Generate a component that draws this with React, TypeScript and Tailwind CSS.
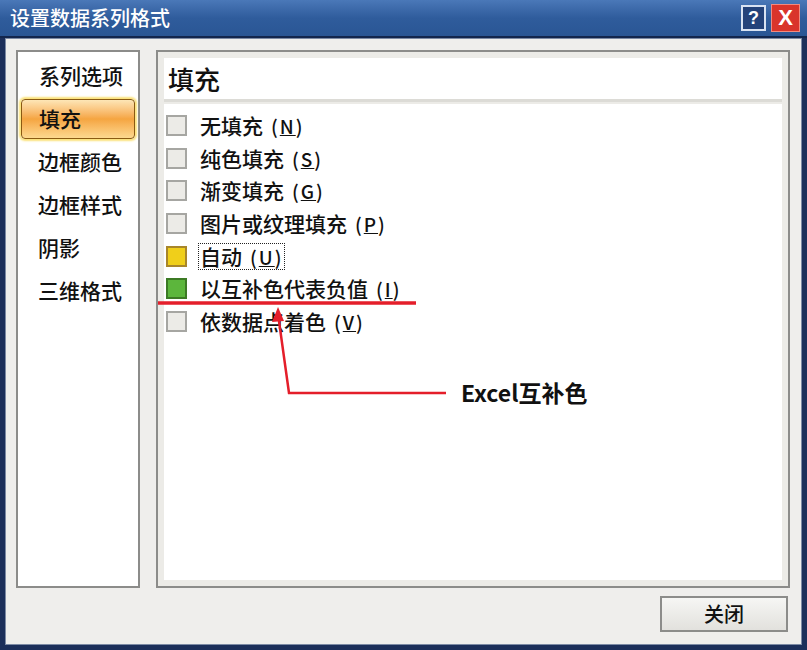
import React from "react";

const F = { fontFamily: '"Noto Sans CJK SC", "Noto Sans", sans-serif' };

function Item({ label, k, box, focus }: { label: string; k: string; box: string; focus?: boolean }) {
  return (
    <div className="flex items-center h-[32.7px]">
      <div className={`w-[21px] h-[21px] border-2 ${box}`} />
      <div className={`ml-[11px] flex items-center text-[21px] leading-[25px] text-[#111] px-[1px] ${focus ? "border border-dotted border-[#222]" : "border border-transparent"}`}>
        <span>{label}</span>
        <span className="ml-[8px] text-[19px] tracking-[2px]">(<u>{k}</u>)</span>
      </div>
    </div>
  );
}

export default function App() {
  const left = ["系列选项", "填充", "边框颜色", "边框样式", "阴影", "三维格式"];
  return (
    <div className="w-[807px] h-[650px] bg-[#1c2f5a] flex flex-col relative overflow-hidden font-medium" style={F}>
      {/* title bar */}
      <div className="h-[38px] bg-gradient-to-b from-[#4a78b8] via-[#2f5c9c] to-[#2a5694] flex items-center justify-between pl-[10px] pr-[7px] border-b-2 border-[#13264d]">
        <span className="text-white text-[20px] leading-none">设置数据系列格式</span>
        <div className="flex items-center gap-[5px]">
          <div className="w-[25px] h-[26px] bg-[#23427a] border-2 border-[#d8e2f2] flex items-center justify-center text-white font-bold text-[18px] leading-none" style={{ fontFamily: '"Liberation Sans", sans-serif' }}>?</div>
          <div className="w-[29px] h-[28px] bg-[#d9342b] border border-[#f08a80] flex items-center justify-center text-white font-bold text-[22px] leading-none" style={{ fontFamily: '"Liberation Sans", sans-serif' }}>X</div>
        </div>
      </div>
      {/* body */}
      <div className="flex-1 mx-[5px] mb-[5px] bg-[#efeeec] flex flex-col border border-[#7c8aa4]">
        <div className="flex pt-[11px] pl-[10px] pr-[11px] h-[549px]">
          <div className="w-[124px] h-full bg-white border-2 border-[#8c8c8a] flex flex-col pt-[2px]">
            {left.map((t, i) =>
              i === 1 ? (
                <div key={t} className="mx-[3px] h-[40px] my-[1.5px] rounded-[4px] border border-[#8a5a12] bg-gradient-to-b from-[#fde6b6] via-[#f5a540] to-[#fcd98e] shadow-[0_0_2px_2px_#fbe27a] flex items-center pl-[17px] text-[21px] text-[#111]">
                  {t}
                </div>
              ) : (
                <div key={t} className={`h-[43px] flex items-center text-[21px] text-[#111] ${i === 0 ? "pl-[21px]" : "pl-[20px]"}`}>
                  {t}
                </div>
              )
            )}
          </div>
          <div className="ml-[16px] flex-1 h-full border-2 border-[#8c8c8a] bg-[#ecebe7] p-[6px] flex flex-col">
            <div className="h-[44px] bg-white border-b-[3px] border-[#dcdbd6] flex items-center pl-[4px] text-[26px] text-[#111]">填充</div>
            <div className="flex-1 bg-white mt-[2px] pl-[2px] pt-[5px] flex flex-col">
              <Item label="无填充" k="N" box="border-[#a6a6a2] bg-[#ecebe7]" />
              <Item label="纯色填充" k="S" box="border-[#a6a6a2] bg-[#ecebe7]" />
              <Item label="渐变填充" k="G" box="border-[#a6a6a2] bg-[#ecebe7]" />
              <Item label="图片或纹理填充" k="P" box="border-[#a6a6a2] bg-[#ecebe7]" />
              <Item label="自动" k="U" box="border-[#a8862a] bg-[#f0cf1a]" focus />
              <Item label="以互补色代表负值" k="I" box="border-[#3c7a24] bg-[#5cb63c]" />
              <Item label="依数据点着色" k="V" box="border-[#a6a6a2] bg-[#ecebe7]" />
            </div>
          </div>
        </div>
        <div className="flex-1 flex justify-end items-start pt-[8px] pr-[13px]">
          <div className="w-[128px] h-[36px] border-2 border-[#8c8c8a] bg-gradient-to-b from-[#f6f6f4] to-[#e2e1dd] flex items-center justify-center text-[20px] text-[#111]">关闭</div>
        </div>
      </div>
      {/* annotation overlay */}
      <svg className="absolute left-0 top-0 pointer-events-none" width="807" height="650">
        <line x1="158" y1="303" x2="416" y2="303" stroke="#e41e2a" strokeWidth="3.5" />
        <polyline points="278,314 289,393 446,393" fill="none" stroke="#e41e2a" strokeWidth="2.5" />
        <polygon points="278,307 272,322 284,321" fill="#e41e2a" />
      </svg>
      <div className="absolute left-[461px] top-[377px] text-[23px] font-bold text-[#111] leading-[30px]">Excel互补色</div>
    </div>
  );
}
